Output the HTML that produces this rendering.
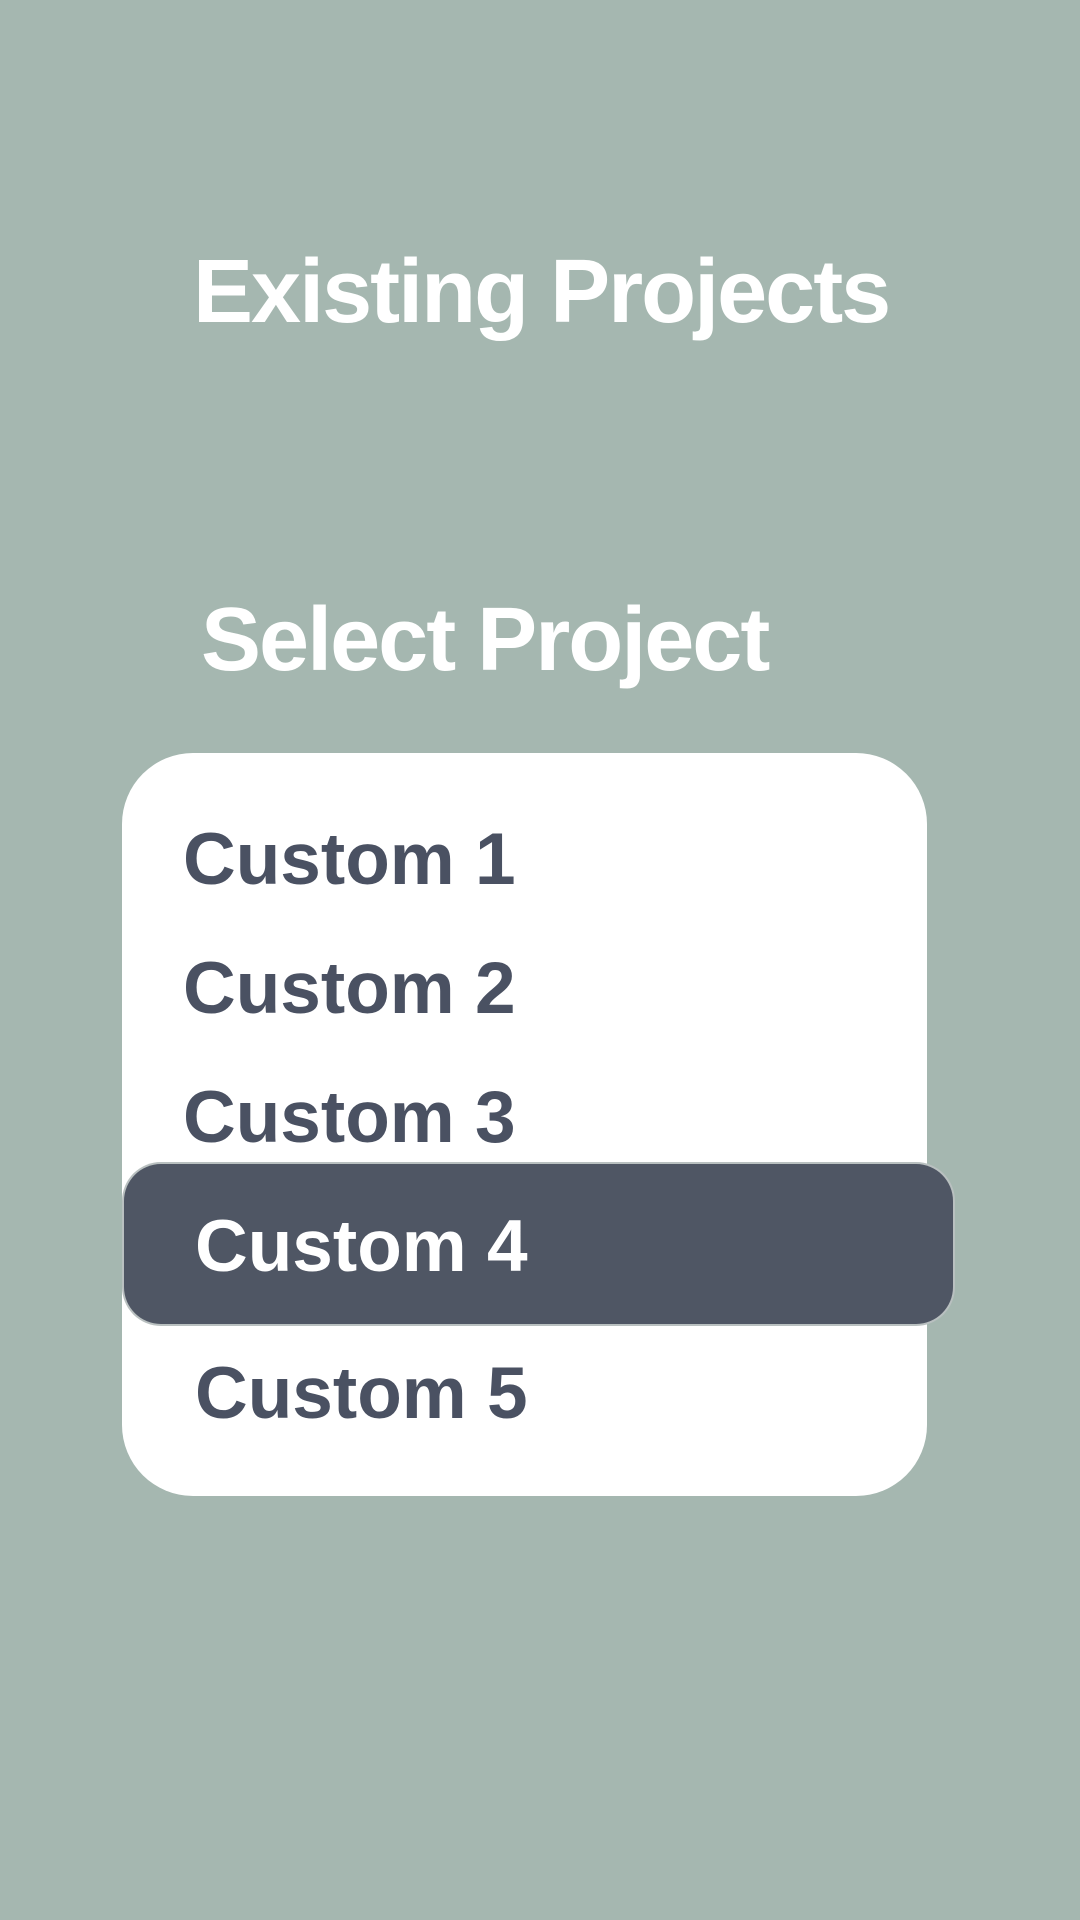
<!DOCTYPE html>
<html><head><meta charset="utf-8"><style>
html,body{margin:0;padding:0}
body{width:1080px;height:1920px;background:#a5b7b0;position:relative;overflow:hidden;font-family:"Liberation Sans",sans-serif;font-weight:bold}
.t{position:absolute;white-space:nowrap;line-height:1}
.card{position:absolute;left:122px;top:753px;width:805px;height:743px;background:#fff;border-radius:71px}
.sel{position:absolute;left:124px;top:1164px;width:829px;height:160px;background:#4f5664;border-radius:37px;box-shadow:0 0 0 2px #b9c0c0}
.it{color:#4a5162;font-size:73px;letter-spacing:0px}
</style></head><body>
<div class="t" style="left:193px;top:247px;font-size:90px;color:#fff;letter-spacing:-2px">Existing Projects</div>
<div class="t" style="left:201px;top:595px;font-size:90px;color:#fff;letter-spacing:-2px">Select Project</div>
<div class="card"></div>
<div class="t it" style="left:183px;top:823px">Custom 1</div>
<div class="t it" style="left:183px;top:952px">Custom 2</div>
<div class="t it" style="left:183px;top:1081px">Custom 3</div>
<div class="sel"></div>
<div class="t it" style="left:195px;top:1210px;color:#fff">Custom 4</div>
<div class="t it" style="left:195px;top:1357px">Custom 5</div>
</body></html>
